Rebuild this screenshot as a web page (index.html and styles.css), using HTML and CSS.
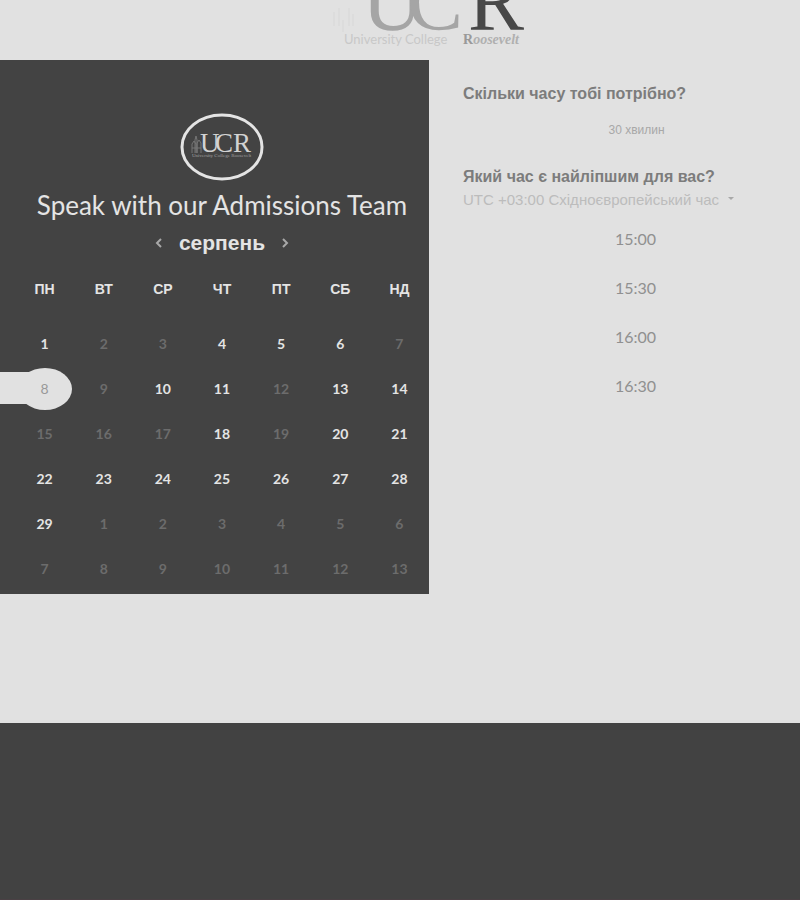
FILE: index.html
```
<!DOCTYPE html>
<html lang="uk">
<head>
<meta charset="utf-8">
<meta name="viewport" content="width=device-width, initial-scale=1">
<title>University College Roosevelt</title>
<link rel="stylesheet" href="styles.css">
</head>
<body>
<header class="site-header">
  <svg class="brand" width="200" height="60" viewBox="0 0 200 60" role="img" aria-label="UCR University College Roosevelt">
    <g class="brand-tower"><path d="M4 12v14M9 8v18M13 20v12M19 8v18M23 14v12"/></g>
    <text class="brand-letter" x="32" y="30">U</text>
    <text class="brand-letter" x="77" y="30">C</text>
    <text class="brand-letter brand-dark" x="138" y="30">R</text>
    <text class="brand-sub" x="14" y="44">University College</text>
    <text class="brand-sub brand-name" x="133" y="44">R<tspan class="brand-italic">oosevelt</tspan></text>
  </svg>
</header>
<main class="booking">
  <section class="calendar">
    <svg class="avatar" width="84" height="68" viewBox="0 0 84 68" role="img" aria-label="UCR">
      <ellipse class="avatar-ring" cx="42" cy="34" rx="40" ry="32"/>
      <path class="avatar-tower" d="M12 40V31l2-3 2 3v9M15 40V27l1-4 1 4v13M17 40V30l2-3 2 3v10M12 35h9"/>
      <text class="avatar-letters" y="39"><tspan x="20">U</tspan><tspan x="35">C</tspan><tspan x="53">R</tspan></text>
      <text class="avatar-sub" x="12" y="44">University College Roosevelt</text>
    </svg>
    <h1 class="title">Speak with our Admissions Team</h1>
    <div class="month">
      <button class="month-nav" type="button" aria-label="Попередній місяць"><svg width="8" height="10" viewBox="0 0 8 10"><path d="M6 1 2 5l4 4"/></svg></button>
      <h2 class="month-name">серпень</h2>
      <button class="month-nav" type="button" aria-label="Наступний місяць"><svg width="8" height="10" viewBox="0 0 8 10"><path d="m2 1 4 4-4 4"/></svg></button>
    </div>
    <table class="days">
      <thead><tr><th>ПН</th><th>ВТ</th><th>СР</th><th>ЧТ</th><th>ПТ</th><th>СБ</th><th>НД</th></tr></thead>
      <tbody>
        <tr><td><button>1</button></td><td><button disabled>2</button></td><td><button disabled>3</button></td><td><button>4</button></td><td><button>5</button></td><td><button>6</button></td><td><button disabled>7</button></td></tr>
        <tr><td class="selected"><button aria-pressed="true">8</button></td><td><button disabled>9</button></td><td><button>10</button></td><td><button>11</button></td><td><button disabled>12</button></td><td><button>13</button></td><td><button>14</button></td></tr>
        <tr><td><button disabled>15</button></td><td><button disabled>16</button></td><td><button disabled>17</button></td><td><button>18</button></td><td><button disabled>19</button></td><td><button>20</button></td><td><button>21</button></td></tr>
        <tr><td><button>22</button></td><td><button>23</button></td><td><button>24</button></td><td><button>25</button></td><td><button>26</button></td><td><button>27</button></td><td><button>28</button></td></tr>
        <tr><td><button>29</button></td><td><button disabled>1</button></td><td><button disabled>2</button></td><td><button disabled>3</button></td><td><button disabled>4</button></td><td><button disabled>5</button></td><td><button disabled>6</button></td></tr>
        <tr><td><button disabled>7</button></td><td><button disabled>8</button></td><td><button disabled>9</button></td><td><button disabled>10</button></td><td><button disabled>11</button></td><td><button disabled>12</button></td><td><button disabled>13</button></td></tr>
      </tbody>
    </table>
  </section>
  <section class="options">
    <h2 class="question">Скільки часу тобі потрібно?</h2>
    <button class="duration" type="button">30 хвилин</button>
    <h2 class="question" id="time-question">Який час є найліпшим для вас?</h2>
    <div class="zone">
      <select class="zone-select" aria-label="Часовий пояс"><option>UTC +03:00 Східноєвропейський час</option></select>
      <svg class="zone-caret" width="6" height="4" viewBox="0 0 6 4" aria-hidden="true"><path d="M0 0h6L3 3z"/></svg>
    </div>
    <div class="slots" role="group" aria-labelledby="time-question">
      <button class="slot" type="button">15:00</button>
      <button class="slot" type="button">15:30</button>
      <button class="slot" type="button">16:00</button>
      <button class="slot" type="button">16:30</button>
    </div>
  </section>
</main>
<footer class="site-footer"></footer>
</body>
</html>
```
FILE: styles.css
```
* {
  box-sizing: border-box;
}

body {
  margin: 0;
  min-height: 100vh;
  display: flex;
  flex-direction: column;
  background: #e1e1e1;
  color: #7c7c7c;
  font-family: "Liberation Sans", sans-serif;
}

button,
select {
  margin: 0;
  padding: 0;
  border: 0;
  background: none;
  color: inherit;
  font: inherit;
}

h1,
h2 {
  margin: 0;
}

.site-header {
  display: flex;
  justify-content: center;
  padding-left: 60px;
}

.brand {
  display: block;
  font-family: "Liberation Serif", serif;
}

.brand-tower {
  fill: none;
  stroke: #d7d7d7;
}

.brand-letter {
  font-size: 84px;
  fill: #a5a5a5;
}

.brand-dark {
  fill: #484848;
}

.brand-sub {
  font-family: Lato, sans-serif;
  font-size: 13px;
  fill: #c8c8c8;
}

.brand-name {
  font-family: "Liberation Serif", serif;
  font-size: 14px;
  font-weight: bold;
  fill: #999;
}

.brand-italic {
  font-style: italic;
  fill: #b0b0b0;
}

.booking {
  display: grid;
  grid-template-columns: 429fr 371fr;
}

.calendar {
  display: flex;
  flex-direction: column;
  align-items: center;
  padding: 53px 0 3px 15px;
  background: #434343;
  color: #e4e4e4;
}

.avatar-ring {
  fill: none;
  stroke: #e4e4e4;
  stroke-width: 3;
}

.avatar-tower {
  fill: none;
  stroke: #777;
}

.avatar-letters {
  font: 27px "Liberation Serif", serif;
  fill: #d2d2d2;
}

.avatar-sub {
  font: 5px "Liberation Serif", serif;
  fill: #a0a0a0;
}

.title {
  margin-top: 8px;
  font: 26px/32px Lato, sans-serif;
  white-space: nowrap;
}

.month {
  display: flex;
  align-items: center;
  gap: 16px;
  margin-top: 10px;
}

.month-nav {
  display: flex;
  padding: 4px 0;
}

.month-nav path {
  fill: none;
  stroke: #a8a8a8;
  stroke-width: 2;
}

.month-name {
  font-size: 21px;
  line-height: 24px;
}

.days {
  width: 100%;
  margin-top: 12px;
  border-collapse: collapse;
  table-layout: fixed;
}

.days th {
  height: 54px;
  padding: 0 0 10px;
  font-size: 14px;
}

.days td {
  position: relative;
  height: 45px;
  padding: 0;
  text-align: center;
}

.days button {
  width: 54px;
  height: 42px;
  border-radius: 50%;
  font: bold 14px Lato, sans-serif;
}

.days button:disabled {
  color: #6c6c6c;
}

.days .selected button {
  position: relative;
  background: #e1e1e1;
  color: #999;
  font-weight: normal;
}

.selected::before {
  content: "";
  position: absolute;
  top: 6px;
  right: 50%;
  width: 50vw;
  height: 32px;
  background: #e1e1e1;
}

.options {
  display: flex;
  flex-direction: column;
  align-items: flex-start;
  padding: 24px 0 0 34px;
}

.question {
  font-size: 16px;
  line-height: 20px;
}

.duration {
  align-self: stretch;
  height: 43px;
  margin: 4px 0 16px;
  padding-right: 10px;
  text-indent: 20px;
  font-size: 12px;
  color: #a8a8a8;
}

.zone {
  display: flex;
  align-items: center;
  gap: 8px;
}

.zone-select {
  appearance: none;
  height: 24px;
  font-size: 15px;
  color: #bcbcbc;
}

.zone-caret {
  fill: #a8a8a8;
}

.slots {
  align-self: stretch;
  display: flex;
  flex-direction: column;
  gap: 5px;
  margin-top: 5px;
  padding-left: 8px;
}

.slot {
  height: 44px;
  font: 16px Lato, sans-serif;
  color: #909090;
}

.site-footer {
  flex: 1;
  margin-top: 129px;
  border-bottom: 1px solid #4a4044;
  background: #424242;
}
```
